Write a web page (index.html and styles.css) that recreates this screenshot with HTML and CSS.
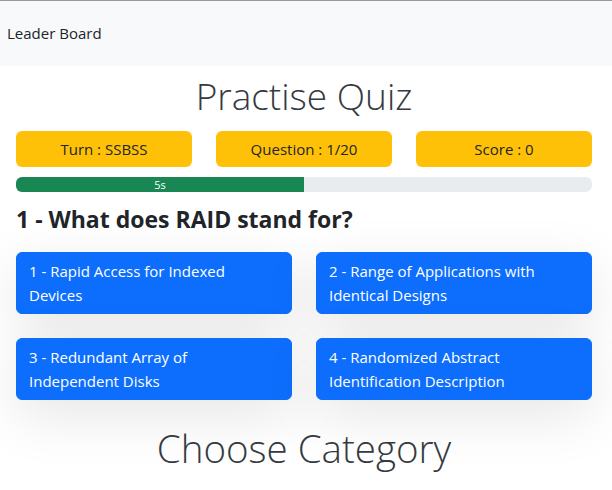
FILE: index.html
```html
<!DOCTYPE html>
<html lang="en">
<head>
<meta charset="utf-8">
<title>Practise Quiz</title>
<link rel="stylesheet" href="styles.css">
</head>
<body>
<nav class="navbar"><span class="brand">Leader Board</span></nav>
<main class="page">
  <h1 class="title">Practise Quiz</h1>
  <div class="stats">
    <div class="stat">Turn : SSBSS</div>
    <div class="stat">Question : 1/20</div>
    <div class="stat">Score : 0</div>
  </div>
  <div class="progress"><div class="progress-bar" style="width:50%">5s</div></div>
  <h2 class="question">1 - What does RAID stand for?</h2>
  <div class="answers">
    <button class="answer">1 - Rapid Access for Indexed Devices</button>
    <button class="answer">2 - Range of Applications with Identical Designs</button>
    <button class="answer">3 - Redundant Array of Independent Disks</button>
    <button class="answer">4 - Randomized Abstract Identification Description</button>
  </div>
  <h1 class="title category">Choose Category</h1>
</main>
</body>
</html>
```

FILE: styles.css
```css
* { box-sizing: border-box; }
html, body { margin: 0; padding: 0; }
body {
  font-family: "Open Sans", "Noto Sans", sans-serif;
  font-size: 16px;
  line-height: 1.5;
  color: #212529;
  background: #fff;
  border-top: 1px solid #999;
  overflow: hidden;
}
.navbar {
  background: #f8f9fa;
  height: 65px;
  display: flex;
  align-items: center;
  padding: 0 7px;
}
.brand { font-size: 15px; color: #212529; }
.page { padding: 0 20px 0 16px; }
.title {
  font-weight: 300;
  font-size: 37px;
  line-height: 1.2;
  text-align: center;
  margin: 8px 0 13px;
  color: #343a40;
}
.stats {
  display: grid;
  grid-template-columns: repeat(3, 1fr);
  gap: 24px;
}
.stat {
  background: #ffc107;
  border-radius: 6px;
  height: 36px;
  display: flex;
  align-items: center;
  justify-content: center;
  font-size: 15px;
  color: #212529;
}
.progress {
  margin-top: 10px;
  height: 15px;
  background: #e9ecef;
  border-radius: 6px;
  overflow: hidden;
  display: flex;
}
.progress-bar {
  background: #198754;
  color: #fff;
  font-size: 11px;
  line-height: 15px;
  text-align: center;
}
.question {
  font-size: 23px;
  font-weight: 700;
  margin: 14px 0 18px;
  line-height: 1.2;
}
.answers {
  display: grid;
  grid-template-columns: 1fr 1fr;
  column-gap: 24px;
  row-gap: 24px;
}
.answer {
  font-family: inherit;
  font-size: 15px;
  line-height: 24px;
  text-align: left;
  color: #fff;
  background: #0d6efd;
  border: 1px solid #0d6efd;
  border-radius: 6px;
  padding: 6px 12px;
  height: 62px;
  box-shadow: 0 16px 56px rgba(0,0,0,.1);
}
.title.category { font-size: 38.5px; margin-top: 25px; }
```
